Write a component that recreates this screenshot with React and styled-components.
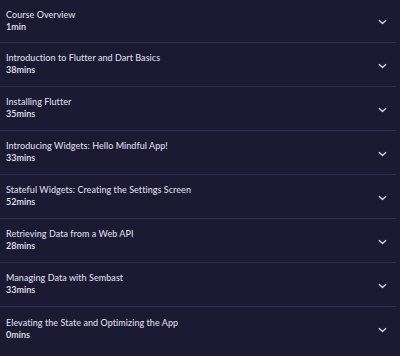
import React from "react";
import { styled, createGlobalStyle } from "styled-components";

const lessons = [
  { title: "Course Overview", duration: "1min" },
  { title: "Introduction to Flutter and Dart Basics", duration: "38mins" },
  { title: "Installing Flutter", duration: "35mins" },
  { title: "Introducing Widgets: Hello Mindful App!", duration: "33mins" },
  { title: "Stateful Widgets: Creating the Settings Screen", duration: "52mins" },
  { title: "Retrieving Data from a Web API", duration: "28mins" },
  { title: "Managing Data with Sembast", duration: "33mins" },
  { title: "Elevating the State and Optimizing the App", duration: "0mins" },
];

const Chevron = () => (
  <svg width="9" height="6" viewBox="0 0 9 6" fill="none">
    <path
      d="M1.3 1.4 L4.5 4.4 L7.7 1.4"
      stroke="#d2d0e2"
      strokeWidth="1.4"
      strokeLinecap="round"
      strokeLinejoin="round"
    />
  </svg>
);

const App = () => {
  return (
    <>
      <GlobalStyle />
      <List>
        {lessons.map((item) => (
          <Row key={item.title}>
            <TextBlock>
              <Title>{item.title}</Title>
              <Duration>{item.duration}</Duration>
            </TextBlock>
            <Toggle>
              <Chevron />
            </Toggle>
          </Row>
        ))}
      </List>
    </>
  );
};

const GlobalStyle = createGlobalStyle`
  html, body {
    margin: 0;
    background: #1c1a33;
  }
  body {
    font-family: Lato, "Open Sans", sans-serif;
  }
`;

const List = styled.div`
  display: flex;
  flex-direction: column;
  width: 396px;
  height: 356px;
  background: #1c1a33;
`;

const Row = styled.div`
  display: flex;
  align-items: center;
  justify-content: space-between;
  height: 44px;
  box-sizing: border-box;
  padding: 0 8px 0 6px;
  border-bottom: 1px solid #2f2b52;

  &:first-child {
    height: 43px;
  }

  &:last-child {
    border-bottom: none;
  }
`;

const TextBlock = styled.div`
  display: flex;
  flex-direction: column;
  gap: 1px;
  margin-top: -2px;
`;

const Title = styled.span`
  color: #dedde8;
  font-size: 9px;
  font-weight: 500;
  line-height: 11px;
  letter-spacing: 0.05px;
`;

const Duration = styled.span`
  color: #e6e5ef;
  font-size: 9px;
  font-weight: 600;
  line-height: 11px;
`;

const Toggle = styled.div`
  display: flex;
  align-items: center;
  justify-content: center;
  width: 12px;
  height: 12px;
  margin-top: 2px;
`;

export default App;
